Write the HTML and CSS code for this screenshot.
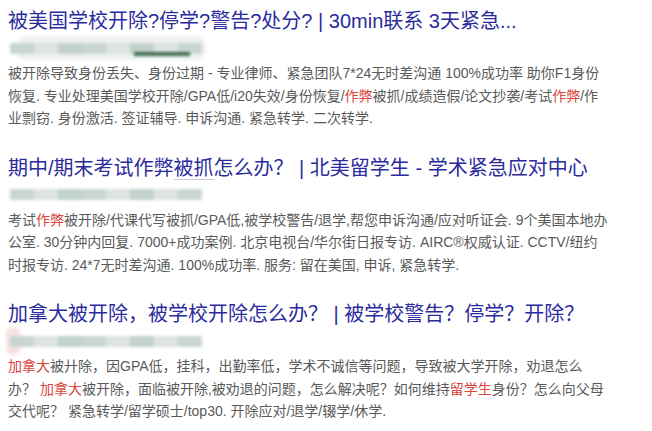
FILE: index.html
```html
<!DOCTYPE html>
<html lang="zh-CN">
<head>
    <meta charset="UTF-8">
    <title>搜索结果</title>
    <link rel="stylesheet" href="styles.css">
</head>
<body>
    <div class="results">
        <div class="result">
            <a class="title" href="#">被美国学校开除?停学?警告?处分? | 30min联系 3天紧急...</a>
            <div class="url url-wide">
                <span class="b1"></span><span class="b2"></span><span class="b3"></span><span class="b1"></span><span class="b2"></span><span class="b3"></span><span class="b2"></span><span class="b1"></span>
                <i class="dots"></i>
            </div>
            <p class="desc">被开除导致身份丢失、身份过期 - 专业律师、紧急团队7*24无时差沟通 100%成功率 助你F1身份恢复. 专业处理美国学校开除/GPA低/i20失效/身份恢复/<em>作弊</em>被抓/成绩造假/论文抄袭/考试<em>作弊</em>/作业剽窃. 身份激活. 签证辅导. 申诉沟通. 紧急转学. 二次转学.</p>
        </div>
        <div class="result">
            <a class="title" href="#">期中/期末考试作弊<span class="hover">被抓</span>怎么办？ | 北美留学生 - 学术紧急应对中心</a>
            <div class="url">
                <span class="b1"></span><span class="b2"></span><span class="b3"></span><span class="b1"></span><span class="b2"></span><span class="b3"></span><span class="b2"></span><span class="b1"></span>
            </div>
            <p class="desc">考试<em>作弊</em>被开除/代课代写被抓/GPA低,被学校警告/退学,帮您申诉沟通/应对听证会. 9个美国本地办公室. 30分钟内回复. 7000+成功案例. 北京电视台/华尔街日报专访. AIRC®权威认证. CCTV/纽约时报专访. 24*7无时差沟通. 100%成功率. 服务: 留在美国, 申诉, 紧急转学.</p>
        </div>
        <div class="result">
            <a class="title" href="#">加拿大被开除，被学校开除怎么办？ | 被学校警告？停学？开除？</a>
            <div class="url url-pink">
                <span class="b1"></span><span class="b2"></span><span class="b3"></span><span class="b1"></span><span class="b2"></span><span class="b3"></span><span class="b2"></span><span class="b1"></span>
            </div>
            <p class="desc"><em>加拿大</em>被廾除，因GPA低，挂科，出勤率低，学术不诚信等问题，导致被大学开除，劝退怎么办？ <em>加拿大</em>被开除，面临被开除,被劝退的问题，怎么解决呢？如何维持<em>留学生</em>身份？怎么向父母交代呢？ 紧急转学/留学硕士/top30. 开除应对/退学/辍学/休学.</p>
        </div>
    </div>
</body>
</html>
```

FILE: styles.css
```css
body {
    margin: 0;
    padding: 0;
    background: #fff;
    font-family: "Liberation Sans", Arial, "Noto Sans CJK SC", sans-serif;
}
.results {
    padding: 8px 0 0 8px;
    width: 600.5px;
}
.result {
    margin-bottom: 25px;
}
.title {
    display: block;
    font-size: 20px;
    line-height: 26px;
    color: #2b2b9e;
    text-decoration: none;
    white-space: nowrap;
}
.title .hover {
    border-bottom: 1px solid #c9c6e6;
}
.url {
    position: relative;
    height: 28px;
    display: flex;
    align-items: center;
    padding-left: 2px;
    filter: blur(1.6px);
}
.url span {
    display: block;
    width: 24px;
    height: 11px;
}
.url .b1 { background: #c9d6d0; }
.url .b2 { background: #dde4e1; }
.url .b3 { background: #c2d1ca; }
.url-wide::before {
    content: "";
    position: absolute;
    left: 8px;
    top: 2px;
    width: 190px;
    height: 24px;
    background: #eef1f0;
    border-radius: 10px;
    z-index: -1;
}
.url-pink::before {
    content: "";
    position: absolute;
    left: -2px;
    top: 0;
    width: 14px;
    height: 28px;
    background: #f7e3e3;
    border-radius: 6px;
    z-index: -1;
}
.url .dots {
    position: absolute;
    left: 126px;
    top: 18px;
    width: 56px;
    height: 4px;
    background: #3d6b4e;
}
.desc {
    margin: 0;
    font-size: 14px;
    line-height: 22.5px;
    color: #5a5a5a;
}
.desc em {
    font-style: normal;
    color: #d9453c;
}
```
